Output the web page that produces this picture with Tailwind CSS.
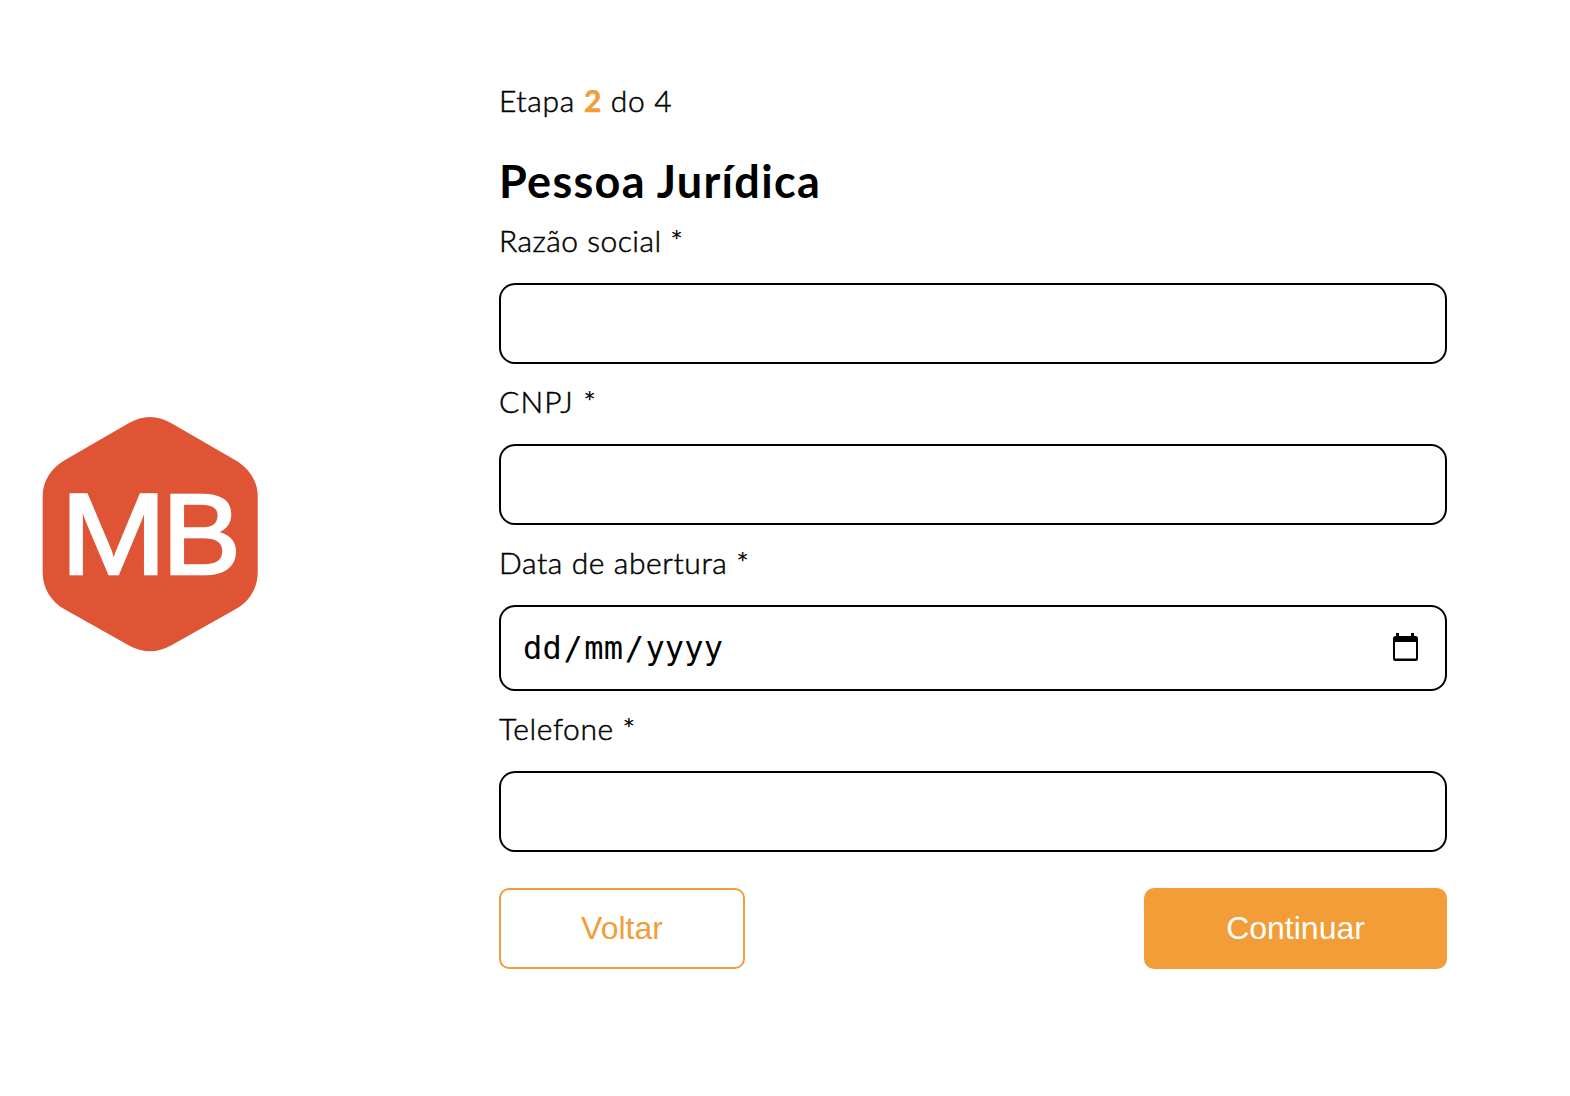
<!DOCTYPE html>
<html lang="pt-BR">
<head>
<meta charset="utf-8">
<title>Cadastro - Pessoa Jurídica</title>
<script src="https://cdn.jsdelivr.net/npm/@tailwindcss/browser@4"></script>
</head>
<body class="bg-white text-black font-['Lato',sans-serif] overflow-hidden">
<main class="flex h-[1096px] w-[1570px] pt-[80px]">
  <aside class="w-[499px] shrink-0 pl-[42px] pt-[336px]">
    <svg width="217" height="236" viewBox="42 416 217 236" aria-label="MB">
      <path fill="#df5434" d="M129 423Q150 411 171 423L235 460C249 468 257.700 481 257.700 496V573C257.700 588 249 602 235 609.500L171 645.500Q150 657 129 645.500L65 609.500C51 602 42.700 588 42.700 573V496C42.700 481 51 468 65 460Z"/>
      <g fill="#fff" stroke="#fff" stroke-width="2.500" font-family="Liberation Sans, sans-serif" font-size="115">
        <text x="60.500" y="574.300" textLength="106" lengthAdjust="spacingAndGlyphs">M</text>
        <text x="162" y="574.300" textLength="79" lengthAdjust="spacingAndGlyphs">B</text>
      </g>
    </svg>
  </aside>
  <form class="w-[948px] text-[30px] leading-[40px] font-light">
    <p class="h-[40px] whitespace-nowrap tracking-[0.7px] [-webkit-text-stroke:0.5px]">Etapa <b class="font-bold text-[#f29d38]">2</b> do 4</p>
    <h1 class="mt-[31px] h-[60px] text-[45px] leading-[60px] font-bold tracking-[1.3px]">Pessoa Jurídica</h1>
    <label class="mt-[10px] block h-[62px] -translate-y-px tracking-[0.5px] [-webkit-text-stroke:0.5px]">Razão social *</label>
    <input class="block h-[81px] w-full rounded-[16px] border-2 border-black px-6">
    <label class="mt-[18px] block h-[62px] -translate-y-px tracking-[1.2px] [-webkit-text-stroke:0.5px]">CNPJ *</label>
    <input class="block h-[81px] w-full rounded-[16px] border-2 border-black px-6">
    <label class="mt-[18px] block h-[62px] -translate-y-px tracking-[0.6px] [-webkit-text-stroke:0.5px]">Data de abertura *</label>
    <div class="flex h-[86px] w-full items-center justify-between rounded-[16px] border-2 border-black pl-[21px] pr-[26px] font-['DejaVu_Sans_Mono',monospace] text-[32px] font-normal">
      <span class="flex"><span class="px-px tracking-[0.2px]">dd</span><span class="px-[0.5px]">/</span><span class="px-px tracking-[0.2px]">mm</span><span class="px-[0.5px]">/</span><span class="px-px tracking-[0.2px]">yyyy</span></span>
      <svg class="-translate-y-px" width="28" height="30" viewBox="0 0 28 30"><path fill="#000" fill-rule="evenodd" d="M5 1h3v3h12V1h3v3h1.500a2.500 2.500 0 0 1 2.500 2.500v20a2.500 2.500 0 0 1-2.500 2.500h-20A2.500 2.500 0 0 1 2 26.500v-20A2.500 2.500 0 0 1 4.500 4H5zM4 10v16.500h21V10z"/></svg>
    </div>
    <label class="mt-[18px] block h-[62px] -translate-y-px tracking-[0.6px] [-webkit-text-stroke:0.5px]">Telefone *</label>
    <input class="block h-[81px] w-full rounded-[16px] border-2 border-black px-6">
    <div class="mt-9 flex justify-between font-['Liberation_Sans',sans-serif] text-[32px] font-normal">
      <button type="button" class="h-[81px] w-[246px] rounded-[10px] border-2 border-[#f29d38] pb-[2px] text-[#f29d38]">Voltar</button>
      <button type="button" class="h-[81px] w-[303px] rounded-[10px] bg-[#f29d38] pb-[2px] text-white">Continuar</button>
    </div>
  </form>
</main>
</body>
</html>
